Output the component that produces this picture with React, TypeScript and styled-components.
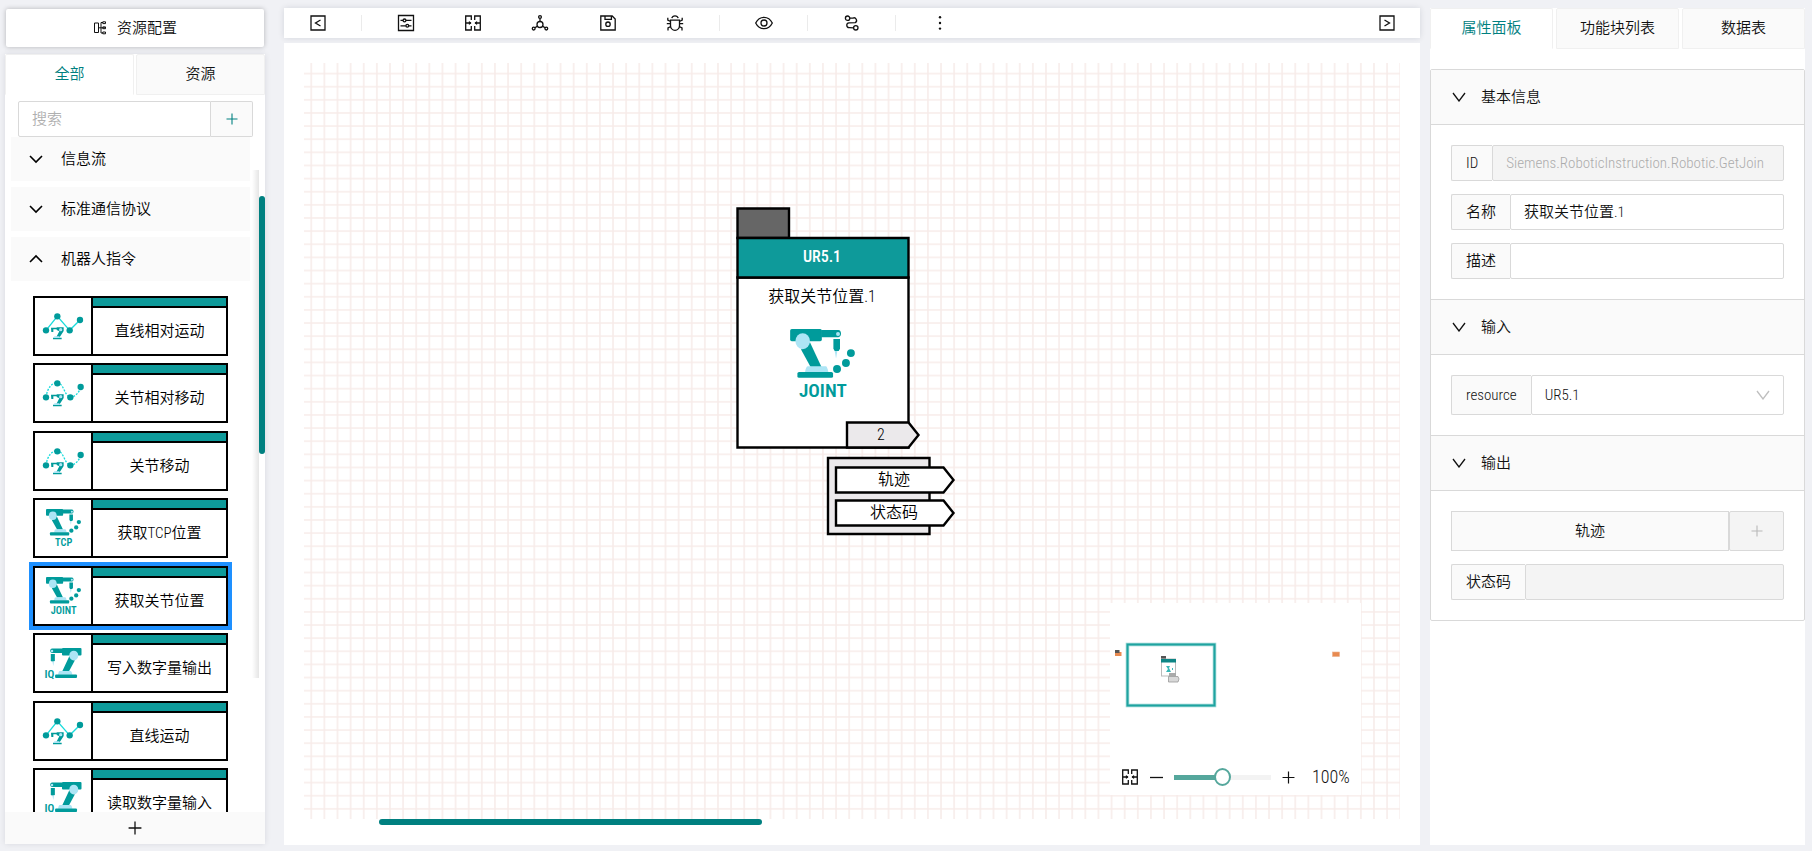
import React, { useState } from "react";
import styled, { createGlobalStyle } from "styled-components";

const teal = "#008080";
const brand = "#009b9b";
const pale = "#ade5f5";
const ink = "#111";
const line = "#d9d9d9";
const soft = "#fafafa";
const fontStack =
  '"Roboto Condensed", "Roboto", "Noto Sans CJK SC", sans-serif';

const GlobalStyle = createGlobalStyle`
  *, *::before, *::after { box-sizing: border-box; }
  body {
    margin: 0;
    background: #f0f1f5;
    color: ${ink};
    font: 350 15px/22px ${fontStack};
  }
  button, input, select { font: inherit; color: inherit; margin: 0; }
  button { cursor: pointer; }
`;

const Page = styled.div`
  display: grid;
  grid-template-columns: 260px minmax(0, 1fr) 375px;
  height: 100vh;
  min-height: 640px;
  padding: 8px 7px 6px 5px;
`;

/* ---------- left column ---------- */

const Sidebar = styled.aside`
  display: flex;
  flex-direction: column;
  gap: 7px;
  min-height: 0;
  padding-top: 1px;
`;

const ConfigButton = styled.button`
  display: flex;
  align-items: center;
  justify-content: center;
  gap: 10px;
  height: 38px;
  margin: 0 1px;
  border: 0;
  border-radius: 2px;
  background: #fff;
  box-shadow: 0 0 5px rgba(0, 0, 0, 0.25);
`;

const LibraryPanel = styled.section`
  position: relative;
  display: flex;
  flex: 1;
  flex-direction: column;
  min-height: 0;
  margin-bottom: 1px;
  background: #fff;
  box-shadow: 0 0 6px rgba(0, 21, 41, 0.1);
`;

const Tabs = styled.div<{ $gap: number }>`
  display: flex;
  flex: none;
  gap: ${(p) => p.$gap}px;
`;

const Tab = styled.button<{ $active?: boolean }>`
  flex: 1;
  height: 41px;
  padding: 0 0 2px;
  border: 1px solid #f0f0f0;
  border-bottom-color: ${(p) => (p.$active ? "#fff" : "#f0f0f0")};
  border-radius: 2px 2px 0 0;
  background: ${(p) => (p.$active ? "#fff" : soft)};
  color: ${(p) => (p.$active ? teal : ink)};
`;

const SearchRow = styled.form`
  display: flex;
  flex: none;
  height: 36px;
  margin: 6px 12px 0 13px;
`;

const SearchInput = styled.input`
  flex: 1;
  min-width: 0;
  padding: 0 13px;
  border: 1px solid ${line};
  border-radius: 2px 0 0 2px;
  outline: 0;
  &::placeholder { color: #b0b0b0; }
`;

const SearchAdd = styled.button`
  display: grid;
  place-items: center;
  width: 42px;
  padding: 0;
  border: 1px solid ${line};
  border-left: 0;
  border-radius: 0 2px 2px 0;
  background: ${soft};
  color: ${teal};
`;

const GroupList = styled.div`
  display: flex;
  flex: 1;
  flex-direction: column;
  gap: 6px;
  min-height: 0;
  overflow: hidden;
  padding: 0 15px 0 6px;
`;

const GroupHeader = styled.button`
  display: flex;
  flex: none;
  align-items: center;
  gap: 18px;
  height: 44px;
  padding: 0 18px;
  border: 0;
  background: ${soft};
  color: #000;
`;

const CardList = styled.div`
  display: grid;
  flex: none;
  grid-auto-rows: 60px;
  align-content: space-between;
  height: 532px;
  margin: 9px 22px 0;
`;

const Card = styled.button<{ $selected?: boolean }>`
  display: grid;
  grid-template-columns: 58px 1fr;
  padding: 0;
  border: 2px solid #000;
  outline: ${(p) => (p.$selected ? "4px solid #1e90ff" : "0")};
  background: #fff;
  color: #000;
`;

const CardIcon = styled.span`
  display: grid;
  place-items: center;
  border-right: 2px solid #000;
`;

const CardBody = styled.span`
  display: grid;
  grid-template-rows: 10px 1fr;
  align-items: center;
  &::before {
    content: "";
    align-self: stretch;
    border-bottom: 2px solid #000;
    background: #0e9a9a;
  }
`;

const LibraryFooter = styled.button`
  display: grid;
  flex: none;
  place-items: center;
  height: 32px;
  border: 0;
  background: ${soft};
`;

const EdgeShade = styled.span`
  position: absolute;
  top: 116px;
  right: 6px;
  bottom: 166px;
  width: 7px;
  background: linear-gradient(to right, rgba(0, 0, 0, 0), rgba(0, 0, 0, 0.1));
`;

const LibraryThumb = styled.span`
  position: absolute;
  top: 142px;
  right: 0;
  width: 6px;
  height: 258px;
  border-radius: 3px;
  background: ${teal};
`;

/* ---------- centre column ---------- */

const Workspace = styled.main`
  display: flex;
  flex-direction: column;
  gap: 5px;
  min-height: 0;
  margin: 0 10px 0 19px;
`;

const Toolbar = styled.div`
  display: flex;
  flex: none;
  align-items: center;
  height: 30px;
  background: #fff;
  box-shadow: 0 0 6px rgba(0, 21, 41, 0.12);
`;

const ToolGroup = styled.div`
  display: grid;
  grid-template-columns: repeat(5, 1fr);
  width: 337px;
`;

const Tool = styled.button`
  display: grid;
  place-items: center;
  min-width: 67px;
  height: 30px;
  padding: 0;
  border: 0;
  background: none;
`;

const ToolSpacer = styled.span`
  flex: 1;
`;

const ToolDivider = styled.span`
  flex: none;
  width: 1px;
  height: 16px;
  margin: 0 10px;
  background: #ebebeb;
`;

const Canvas = styled.div`
  position: relative;
  flex: 1;
  min-height: 0;
  padding: 20px 20px 26px;
  overflow: hidden;
  background: #fff;
`;

const GridLines = styled.svg`
  display: block;
  width: 100%;
  height: 100%;
`;

const NodeDrawing = styled.svg`
  position: absolute;
  left: 446px;
  top: 157px;
  text-anchor: middle;
  font-size: 16px;
`;

const CanvasThumb = styled.span`
  position: absolute;
  left: 95px;
  bottom: 20px;
  width: 383px;
  height: 6px;
  border-radius: 3px;
  background: ${teal};
`;

const Minimap = styled.section`
  position: absolute;
  right: 59px;
  bottom: 50px;
  display: flex;
  flex-direction: column;
  width: 251px;
  height: 192px;
  background: #fff;
`;

const ZoomBar = styled.div`
  display: flex;
  align-items: center;
  height: 36px;
  padding-left: 11px;
`;

const ZoomButton = styled.button`
  display: grid;
  flex: none;
  place-items: center;
  padding: 0;
  border: 0;
  background: none;
  &:first-child { margin-right: 11px; }
`;

const ZoomRange = styled.input`
  width: 97px;
  height: 18px;
  margin: 0 11px;
  appearance: none;
  background: linear-gradient(to right, #55a79c 50%, #f3f3f3 50%) center / 100% 5px
    no-repeat;
  border-radius: 3px;
  &::-webkit-slider-thumb {
    appearance: none;
    width: 17px;
    height: 18px;
    border: 2px solid #55a79c;
    border-radius: 50%;
    background: #fff;
  }
`;

const ZoomValue = styled.output`
  margin-left: 17px;
  font-size: 18px;
`;

/* ---------- right column ---------- */

const Properties = styled.aside`
  min-height: 0;
  overflow: hidden;
  background: #fff;
`;

const Sections = styled.div`
  margin-top: 20px;
  border: 1px solid ${line};
  border-radius: 2px;
`;

const Section = styled.section`
  & + & { border-top: 1px solid ${line}; }
`;

const SectionHeader = styled.button`
  display: flex;
  align-items: center;
  gap: 15px;
  width: 100%;
  height: 55px;
  padding: 0 21px;
  border: 0;
  border-bottom: 1px solid ${line};
  background: ${soft};
`;

const SectionBody = styled.div`
  display: flex;
  flex-direction: column;
  gap: 13px;
  padding: 20px;
`;

const Field = styled.div<{ $tall?: boolean }>`
  position: relative;
  display: flex;
  height: ${(p) => (p.$tall ? 40 : 36)}px;
`;

const FieldLabel = styled.label`
  display: flex;
  flex: none;
  align-items: center;
  padding: 0 14px;
  border: 1px solid ${line};
  border-right: 0;
  border-radius: 2px 0 0 2px;
  background: ${soft};
`;

const FieldInput = styled.input`
  flex: 1;
  min-width: 0;
  padding: 0 13px;
  border: 1px solid ${line};
  border-radius: 2px;
  background: #fff;
  &:disabled { background: #f4f4f4; color: #acacac; }
`;

const FieldSelect = styled.select`
  flex: 1;
  min-width: 0;
  padding: 0 13px;
  border: 1px solid ${line};
  border-radius: 2px;
  appearance: none;
  background: #fff;
`;

const SelectArrow = styled.span`
  position: absolute;
  right: 14px;
  top: 0;
  display: grid;
  height: 100%;
  place-items: center;
  color: #bfbfbf;
  pointer-events: none;
`;

const OutputName = styled.button`
  flex: 1;
  border: 1px solid ${line};
  background: ${soft};
`;

const OutputAdd = styled.button`
  display: grid;
  place-items: center;
  width: 55px;
  padding: 0;
  border: 1px solid ${line};
  border-radius: 2px;
  background: #f4f4f4;
  color: #b8b8b8;
`;

/* ---------- drawings ---------- */

const Stroke = styled.svg`
  display: block;
  fill: none;
  stroke: currentColor;
`;

const Chevron = ({ up, thin }: { up?: boolean; thin?: boolean }) => (
  <Stroke width="14" height="10" viewBox="0 0 14 10" strokeWidth={thin ? 1.3 : 1.6}>
    <path d={up ? "M1 8L7 2L13 8" : thin ? "M1 1L7 9L13 1" : "M1 2L7 8L13 2"} />
  </Stroke>
);

const Plus = ({ size = 12 }: { size?: number }) => (
  <Stroke width={size} height={size} viewBox="0 0 12 12" strokeWidth="1.1">
    <path d="M6 0.5V11.5M0.5 6H11.5" />
  </Stroke>
);

const Minus = () => (
  <Stroke width="13" height="13" viewBox="0 0 13 13" strokeWidth="1.3">
    <path d="M0 6.5H13" />
  </Stroke>
);

const TreeIcon = () => (
  <Stroke width="14" height="14" viewBox="0 0 14 14" strokeWidth="1">
    <path d="M1.5 2H5.5V11.5H1.500ZM5.5 6.8H12.5M10 1.5H8V12H10" />
    <path d="M9.8 0.8H12.5V2.6H9.8ZM9.8 5.9H12.5V7.7H9.8ZM9.8 11H12.5V12.8H9.8Z" />
  </Stroke>
);

const Glyph = ({ children }: { children: React.ReactNode }) => (
  <Stroke width="18" height="18" viewBox="0 0 18 18" strokeWidth="1.3">
    {children}
  </Stroke>
);

const CollapseLeft = () => (
  <Glyph><path d="M2 2H16V16H2ZM11.5 6L6.5 9L11.5 12" /></Glyph>
);
const CollapseRight = () => (
  <Glyph><path d="M2 2H16V16H2ZM6.5 6L11.5 9L6.5 12" /></Glyph>
);
const SlidersIcon = () => (
  <Glyph>
    <path d="M1.5 1.5H16.5V16.5H1.5ZM3.5 6.4H6M9 6.4H14.5M3.5 11.8H8.8M11.8 11.8H14.5" />
    <circle cx="7.5" cy="6.4" r="1.4" />
    <circle cx="10.3" cy="11.8" r="1.4" />
  </Glyph>
);
const FitIcon = () => (
  <Glyph>
    <path d="M7.3 6V2H1.7V16H7.3V12M10.7 6V2H16.3V16H10.7V12M1.7 9H7M16.3 9H11" />
    <path d="M5.2 7.4L7.2 9L5.2 10.6ZM12.8 7.4L10.8 9L12.8 10.6Z" fill="currentColor" strokeWidth="0.5" />
  </Glyph>
);
const MoleculeIcon = () => (
  <Glyph>
    <circle cx="9" cy="10.5" r="3" />
    <circle cx="9" cy="3" r="1.4" />
    <circle cx="2.7" cy="14.6" r="1.4" />
    <circle cx="15.3" cy="14.6" r="1.4" />
    <path d="M9 4.4V7.5M6.5 12.1L3.9 13.8M11.5 12.1L14.1 13.8" />
  </Glyph>
);
const SaveIcon = () => (
  <Glyph>
    <path d="M1.8 2H13.2L16.2 5V16H1.8ZM6 2V5.3H12.4V2" />
    <circle cx="9" cy="10.2" r="2.2" />
  </Glyph>
);
const BugIcon = () => (
  <Glyph>
    <path d="M4.5 6.2H13.5V11.5A4.5 4.8 0 0 1 4.5 11.5ZM5.8 4.2A3.3 3.2 0 0 1 12.2 4.2M0.8 9.6H4.5M13.5 9.6H17.2M4.5 7.5L1.8 6V3.8M13.5 7.5L16.2 6V3.8M4.7 12.5L2 14V16.5M13.3 12.5L16 14V16.5" />
  </Glyph>
);
const EyeIcon = () => (
  <Glyph>
    <path d="M0.7 9C4.4 1.4 13.6 1.4 17.3 9C13.6 16.6 4.4 16.6 0.7 9Z" />
    <circle cx="9" cy="9" r="3" />
  </Glyph>
);
const RouteIcon = () => (
  <Glyph>
    <circle cx="4.6" cy="4.2" r="2.2" />
    <circle cx="12.8" cy="13.8" r="2.2" />
    <path d="M6.8 4.2H9.8A2.3 2.3 0 0 1 12.2 8.6L6 8.8A2.4 2.4 0 0 0 6.4 13.6L10.6 13.8" />
  </Glyph>
);
const MoreIcon = () => (
  <Glyph>
    <g fill="currentColor" stroke="none">
      <circle cx="9" cy="3.3" r="1.2" />
      <circle cx="9" cy="9" r="1.2" />
      <circle cx="9" cy="14.6" r="1.2" />
    </g>
  </Glyph>
);

/* Arm with its base on the left and the tool hanging on the right. */
const Arm = () => (
  <g fill={brand}>
    <rect x="0" y="0" width="96" height="37" rx="5" />
    <path d="M94 3H146Q154 4 154 14Q154 24 146 25H94Z" />
    <circle cx="145" cy="15" r="6" fill={pale} />
    <path d="M33 62L60 40L95 115H62Z" />
    <ellipse cx="38" cy="37" rx="22" ry="24" fill={pale} />
    <path d="M131 30H151V60L147 67H135L131 60Z" />
    <path d="M135 67H143L139 89Z" fill={pale} />
    <path d="M54 113H108Q112 113 116 131H45Q48 113 54 113Z" fill={pale} />
    <rect x="22" y="130" width="108" height="18" rx="5" />
  </g>
);

const JointArt = ({ label, width }: { label: string; width: number }) => (
  <svg width={width} height={Math.round(width * 1.08)} viewBox="0 0 196 212" overflow="visible">
    <Arm />
    <g fill={brand}>
      <circle cx="184" cy="73" r="12" />
      <circle cx="169" cy="103" r="12" />
      <circle cx="142" cy="121" r="12" />
      <text x="99" y="205" textAnchor="middle" fontWeight="600" fontSize="58">
        {label}
      </text>
    </g>
  </svg>
);

const DigitalArt = () => (
  <svg width="37" height="31" viewBox="0 0 110 93" overflow="visible">
    <g transform="translate(109 0) scale(0.61)">
      <g transform="scale(-1 1)"><Arm /></g>
    </g>
    <text x="-2" y="90" fill={brand} fontWeight="600" fontSize="34">IQ</text>
  </svg>
);

const MoveArt = ({ curved }: { curved?: boolean }) => (
  <svg width="42" height="28" viewBox="0 0 126 84">
    <path
      d={curved
        ? "M12 55C16 25 32 10 46 11C66 14 66 48 84 55C100 54 112 40 116 24"
        : "M12 55L46 13L83 55L114 24"}
      fill="none"
      stroke="#19dcdc"
      strokeWidth="4"
      strokeDasharray={curved ? "6 4" : undefined}
    />
    <g fill={brand}>
      <circle cx="12" cy="55" r="9.5" />
      <circle cx="46" cy="13" r="9.5" />
      <circle cx={curved ? 85 : 83} cy="55" r="9.5" />
      <circle cx={curved ? 116 : 114} cy="24" r="9.5" />
      <path d="M44 46H65V57L52 77H42L52 58L44 54ZM27 47H44V52H34V60H28ZM33 77H59V82H33Z" />
    </g>
    <circle cx="56" cy="53" r="5" fill={pale} />
    <path d="M37 73H52L54 78H35Z" fill={pale} />
  </svg>
);

const FunctionNode = () => (
  <NodeDrawing width="230" height="336" viewBox="730 200 230 336">
    <g stroke="#000" strokeWidth="2.4">
      <path d="M737.5 208.5H789V238H737.5Z" fill="#666" />
      <path d="M737.5 277.5H908.5V447.5H737.5Z" fill="#fff" />
      <path d="M737.5 238H908.5V277.5H737.5Z" fill="#0e9a9a" />
      <path d="M847 422.5H908.5L918.5 435L908.5 447.5H847Z" fill="#ebe9eb" />
      <path d="M828 458H929.5V534H828Z" fill="#ebe9eb" />
      <path d="M836 467.5H943.5L953.5 480L943.5 492.5H836Z" fill="#fff" />
      <path d="M836 500.5H943.5L953.5 513L943.5 525.5H836Z" fill="#fff" />
    </g>
    <text x="822" y="262" fill="#fff" fontWeight="500">UR5.1</text>
    <text x="822" y="302">获取关节位置.1</text>
    <svg x="790" y="329" width="66" height="71" overflow="visible">
      <JointArt label="JOINT" width={65} />
    </svg>
    <text x="881" y="440">2</text>
    <text x="894" y="485">轨迹</text>
    <text x="894" y="518">状态码</text>
  </NodeDrawing>
);

const MinimapDrawing = () => (
  <svg width="251" height="156" viewBox="0 0 251 156">
    <rect x="17.5" y="41.5" width="87" height="61" fill="none" stroke="#9fd8d6" strokeWidth="3.6" />
    <rect x="17.5" y="41.5" width="87" height="61" fill="none" stroke="#1fa3a0" strokeWidth="2" />
    <rect x="5" y="49" width="6.5" height="4" fill="#e88a50" />
    <rect x="5" y="47" width="4.5" height="3" fill="#555" />
    <rect x="222.5" y="49" width="7" height="4.5" fill="#e88a50" stroke="#eab08a" strokeWidth="0.6" />
    <rect x="51" y="53" width="5" height="4" fill="#555" />
    <rect x="51.5" y="56" width="14" height="17" fill="#fff" stroke="#bbb" strokeWidth="1" />
    <rect x="51" y="56" width="15" height="3.5" fill="#0e8585" />
    <path d="M56 63H60L59 65L61 69H56L58 66ZM62 65H63V67H62Z" fill="#39b7b7" />
    <rect x="59" y="70" width="7" height="3" fill="#aaa" />
    <path d="M58.5 73.5H68L69 76L68 79H58.5Z" fill="#d8d8d8" stroke="#999" strokeWidth="0.8" />
  </svg>
);

/* ---------- data ---------- */

const cards: { name: string; art: React.ReactNode }[] = [
  { name: "直线相对运动", art: <MoveArt /> },
  { name: "关节相对移动", art: <MoveArt curved /> },
  { name: "关节移动", art: <MoveArt curved /> },
  { name: "获取TCP位置", art: <JointArt label="TCP" width={35} /> },
  { name: "获取关节位置", art: <JointArt label="JOINT" width={35} /> },
  { name: "写入数字量输出", art: <DigitalArt /> },
  { name: "直线运动", art: <MoveArt /> },
  { name: "读取数字量输入", art: <DigitalArt /> },
];

const mainTools = [
  { label: "参数", icon: <SlidersIcon /> },
  { label: "适应", icon: <FitIcon /> },
  { label: "拓扑", icon: <MoleculeIcon /> },
  { label: "保存", icon: <SaveIcon /> },
  { label: "调试", icon: <BugIcon /> },
];

const viewTools = [
  { label: "预览", icon: <EyeIcon /> },
  { label: "连线", icon: <RouteIcon /> },
  { label: "更多", icon: <MoreIcon /> },
];

export default function App() {
  const [selected, setSelected] = useState("获取关节位置");
  const [name, setName] = useState("获取关节位置.1");

  return (
    <Page>
      <GlobalStyle />
      <Sidebar>
        <ConfigButton type="button"><TreeIcon />资源配置</ConfigButton>
        <LibraryPanel>
          <Tabs role="tablist" $gap={2}>
            <Tab role="tab" aria-selected $active>全部</Tab>
            <Tab role="tab" aria-selected={false}>资源</Tab>
          </Tabs>
          <SearchRow onSubmit={(e) => e.preventDefault()}>
            <SearchInput aria-label="搜索" placeholder="搜索" />
            <SearchAdd type="button" aria-label="添加"><Plus /></SearchAdd>
          </SearchRow>
          <GroupList>
            <GroupHeader aria-expanded={false}><Chevron />信息流</GroupHeader>
            <GroupHeader aria-expanded={false}><Chevron />标准通信协议</GroupHeader>
            <GroupHeader aria-expanded><Chevron up />机器人指令</GroupHeader>
            <CardList>
              {cards.map((card) => (
                <Card
                  key={card.name}
                  type="button"
                  $selected={card.name === selected}
                  onClick={() => setSelected(card.name)}
                >
                  <CardIcon>{card.art}</CardIcon>
                  <CardBody>{card.name}</CardBody>
                </Card>
              ))}
            </CardList>
          </GroupList>
          <LibraryFooter type="button" aria-label="新建"><Plus size={14} /></LibraryFooter>
          <EdgeShade />
          <LibraryThumb />
        </LibraryPanel>
      </Sidebar>

      <Workspace>
        <Toolbar>
          <Tool aria-label="收起左侧"><CollapseLeft /></Tool>
          <ToolDivider />
          <ToolGroup>
            {mainTools.map((t) => (
              <Tool key={t.label} aria-label={t.label}>{t.icon}</Tool>
            ))}
          </ToolGroup>
          {viewTools.map((t) => (
            <React.Fragment key={t.label}>
              <ToolDivider />
              <Tool aria-label={t.label}>{t.icon}</Tool>
            </React.Fragment>
          ))}
          <ToolSpacer />
          <Tool aria-label="收起右侧"><CollapseRight /></Tool>
        </Toolbar>
        <Canvas>
          <GridLines>
            <defs>
              <pattern id="mesh" x="0.7" y="4" width="13.12" height="13.13" patternUnits="userSpaceOnUse">
                <path d="M6.56 0V13.13M0 6.56H13.12" stroke="#f7ebe9" strokeWidth="1.5" />
              </pattern>
            </defs>
            <rect width="100%" height="100%" fill="url(#mesh)" />
          </GridLines>
          <FunctionNode />
          <CanvasThumb />
          <Minimap>
            <MinimapDrawing />
            <ZoomBar>
              <ZoomButton aria-label="适应画布"><FitIcon /></ZoomButton>
              <ZoomButton aria-label="缩小"><Minus /></ZoomButton>
              <ZoomRange type="range" aria-label="缩放" min={0} max={200} defaultValue={100} />
              <ZoomButton aria-label="放大"><Plus size={13} /></ZoomButton>
              <ZoomValue>100%</ZoomValue>
            </ZoomBar>
          </Minimap>
        </Canvas>
      </Workspace>

      <Properties>
        <Tabs role="tablist" $gap={3}>
          <Tab role="tab" aria-selected $active>属性面板</Tab>
          <Tab role="tab" aria-selected={false}>功能块列表</Tab>
          <Tab role="tab" aria-selected={false}>数据表</Tab>
        </Tabs>
        <Sections>
          <Section>
            <SectionHeader aria-expanded><Chevron thin />基本信息</SectionHeader>
            <SectionBody>
              <Field>
                <FieldLabel htmlFor="id">ID</FieldLabel>
                <FieldInput id="id" disabled defaultValue="Siemens.RoboticInstruction.Robotic.GetJoin" />
              </Field>
              <Field>
                <FieldLabel htmlFor="name">名称</FieldLabel>
                <FieldInput id="name" value={name} onChange={(e) => setName(e.target.value)} />
              </Field>
              <Field>
                <FieldLabel htmlFor="desc">描述</FieldLabel>
                <FieldInput id="desc" />
              </Field>
            </SectionBody>
          </Section>
          <Section>
            <SectionHeader aria-expanded><Chevron thin />输入</SectionHeader>
            <SectionBody>
              <Field $tall>
                <FieldLabel htmlFor="resource">resource</FieldLabel>
                <FieldSelect id="resource"><option>UR5.1</option></FieldSelect>
                <SelectArrow><Chevron thin /></SelectArrow>
              </Field>
            </SectionBody>
          </Section>
          <Section>
            <SectionHeader aria-expanded><Chevron thin />输出</SectionHeader>
            <SectionBody>
              <Field $tall>
                <OutputName type="button">轨迹</OutputName>
                <OutputAdd type="button" aria-label="添加输出"><Plus /></OutputAdd>
              </Field>
              <Field>
                <FieldLabel htmlFor="status">状态码</FieldLabel>
                <FieldInput id="status" disabled />
              </Field>
            </SectionBody>
          </Section>
        </Sections>
      </Properties>
    </Page>
  );
}
